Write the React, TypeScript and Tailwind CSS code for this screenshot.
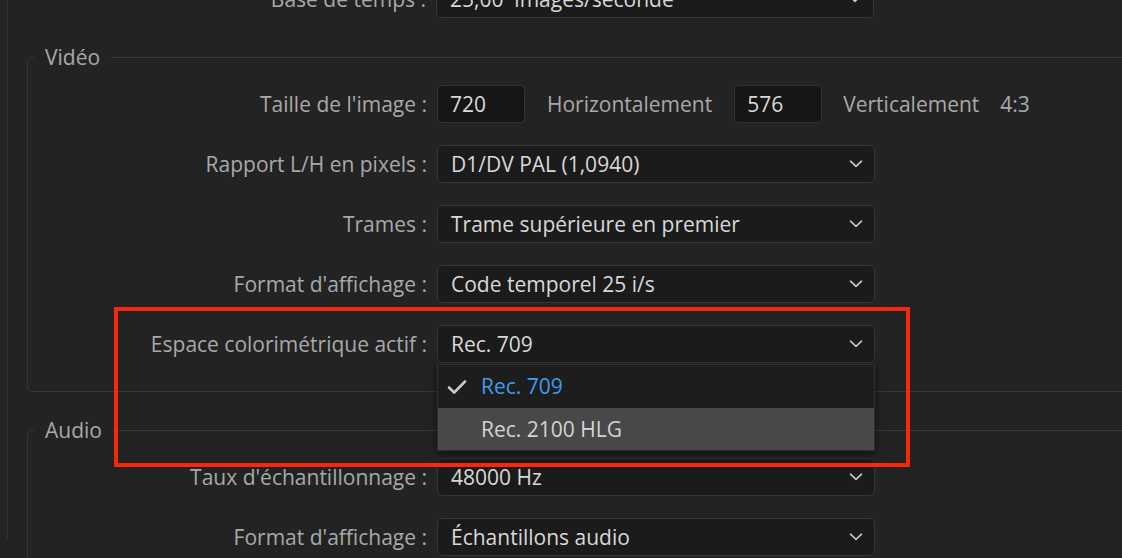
import React from "react";

const FONT = { fontFamily: '"Open Sans", "Noto Sans", sans-serif' };

function Chevron() {
  return (
    <svg width="14" height="8" viewBox="0 0 14 8" className="shrink-0">
      <path d="M1.5 1.2 L7 6.4 L12.5 1.2" fill="none" stroke="#c9c9c9" strokeWidth="1.6" strokeLinecap="round" strokeLinejoin="round" />
    </svg>
  );
}

function Check() {
  return (
    <svg width="20" height="16" viewBox="0 0 20 16" className="shrink-0">
      <path d="M2 8.5 L7.2 13.5 L18 2.5" fill="none" stroke="#c8c8c8" strokeWidth="2.6" strokeLinecap="round" strokeLinejoin="round" />
    </svg>
  );
}

function Select({ value, children }: { value: string; children?: React.ReactNode }) {
  return (
    <div className="relative w-[438px] h-[38px]">
      <div className="w-full h-full flex items-center justify-between pl-[13px] pr-[11px] bg-[#1b1b1b] border border-[#363636] rounded-[5px]">
        <span className="text-[21px] text-[#d8d8d8] whitespace-pre leading-none">{value}</span>
        <Chevron />
      </div>
      {children}
    </div>
  );
}

function Row({ label, children }: { label: string; children: React.ReactNode }) {
  return (
    <div className="flex items-center h-[38px]">
      <div className="w-[399px] text-right text-[21px] text-[#a9a9a9] whitespace-nowrap leading-none">{label}</div>
      <div className="ml-[10px] flex items-center">{children}</div>
    </div>
  );
}

function NumBox({ v }: { v: string }) {
  return (
    <div className="w-[88px] h-[38px] flex items-center pl-[12px] bg-[#161616] border border-[#333333] rounded-[5px] text-[21px] text-[#d8d8d8] leading-none">
      {v}
    </div>
  );
}

function Group({ title, children, className }: { title: string; children: React.ReactNode; className?: string }) {
  return (
    <fieldset className={"w-[1150px] border border-[#363636] rounded-[5px] px-0 " + (className ?? "")}>
      <legend className="ml-[6px] px-[11px] text-[21px] leading-[24px] text-[#a9a9a9]">{title}</legend>
      {children}
    </fieldset>
  );
}

export default function App() {
  return (
    <div className="w-[1122px] h-[558px] overflow-hidden bg-[#232323] relative" style={FONT}>
      <div className="ml-[7px] h-full border-l border-[#363636] pl-[19px]">
        <div className="-mt-[20px]">
          <Row label="Base de temps :">
            <Select value="25,00  images/seconde" />
          </Row>
        </div>

        <Group title="Vidéo" className="mt-[27px] pt-[16px] pb-[28px]">
          <div className="flex flex-col gap-[22px]">
            <Row label="Taille de l'image :">
              <NumBox v="720" />
              <span className="ml-[22px] text-[21px] text-[#a9a9a9] leading-none">Horizontalement</span>
              <div className="ml-[22px]">
                <NumBox v="576" />
              </div>
              <span className="ml-[21px] text-[21px] text-[#a9a9a9] leading-none">Verticalement</span>
              <span className="ml-[21px] text-[21px] text-[#a9a9a9] leading-none">4:3</span>
            </Row>
            <Row label="Rapport L/H en pixels :">
              <Select value="D1/DV PAL (1,0940)" />
            </Row>
            <Row label="Trames :">
              <Select value="Trame supérieure en premier" />
            </Row>
            <Row label="Format d'affichage :">
              <Select value="Code temporel 25 i/s" />
            </Row>
            <Row label="Espace colorimétrique actif :">
              <Select value="Rec. 709" />
            </Row>
          </div>
        </Group>

        <Group title="Audio" className="mt-[26px] pt-[16px] pb-[28px]">
          <div className="flex flex-col gap-[22px]">
            <Row label="Taux d'échantillonnage :">
              <Select value="48000 Hz" />
            </Row>
            <Row label="Format d'affichage :">
              <Select value="Échantillons audio" />
            </Row>
          </div>
        </Group>
      </div>

      {/* open dropdown menu */}
      <div className="absolute left-[437px] top-[364px] w-[438px] border border-[#2f2f2f] bg-[#1d1d1d] shadow-[0_3px_8px_rgba(0,0,0,0.55)] z-10">
        <div className="h-[43px] flex items-center pl-[9px] bg-[#1d1d1d]">
          <Check />
          <span className="ml-[14px] text-[21px] text-[#3c9cf0] leading-none">Rec. 709</span>
        </div>
        <div className="h-[42px] flex items-center pl-[43px] bg-[#484848]">
          <span className="text-[21px] text-[#d4d4d4] leading-none">Rec. 2100 HLG</span>
        </div>
      </div>

      {/* red highlight */}
      <div className="absolute left-[114px] top-[307px] w-[796px] h-[160px] border-[4px] border-[#f8280e] z-20 pointer-events-none" />
    </div>
  );
}
